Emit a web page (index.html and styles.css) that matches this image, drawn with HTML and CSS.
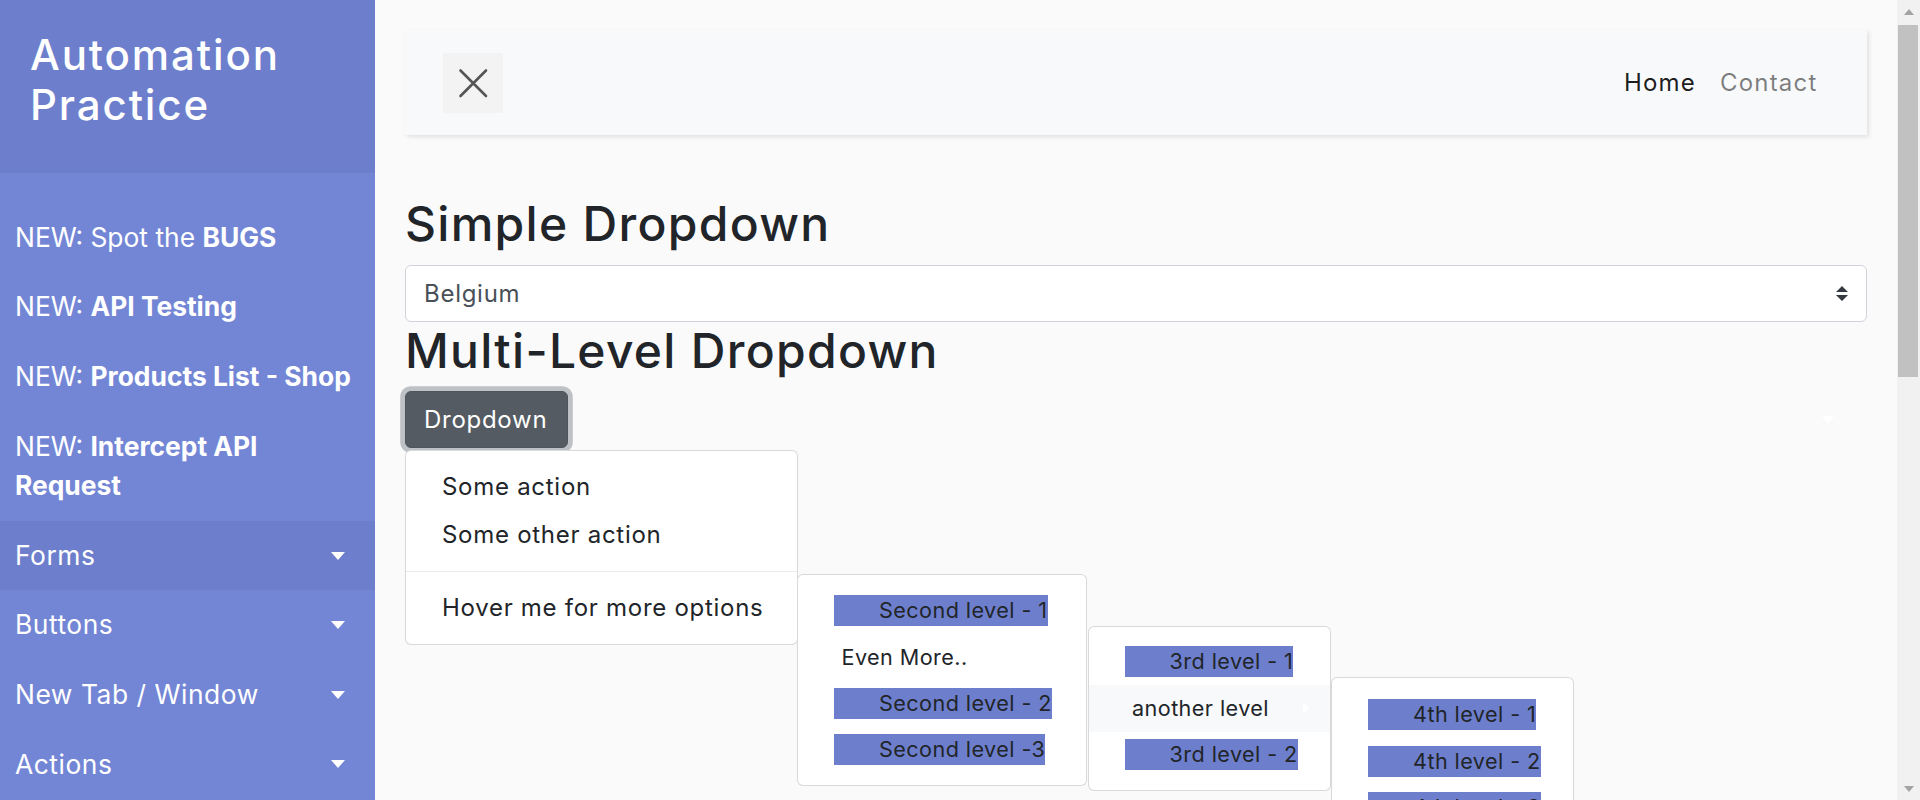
FILE: index.html
```html
<!DOCTYPE html>
<html lang="en">
<head>
<meta charset="utf-8">
<title>Automation Practice - Dropdowns</title>
<link rel="stylesheet" href="styles.css">
</head>
<body>
<div class="wrapper">
  <nav class="sidebar">
    <div class="sidebar-header">
      <h3>Automation Practice</h3>
    </div>
    <ul class="side-menu">
      <li><a href="#">NEW: Spot the <b>BUGS</b></a></li>
      <li><a href="#">NEW: <b>API Testing</b></a></li>
      <li><a href="#">NEW: <b>Products List - Shop</b></a></li>
      <li><a href="#">NEW: <b>Intercept API<br>Request</b></a></li>
      <li class="active"><a class="toggle" href="#">Forms</a></li>
      <li><a class="toggle" href="#">Buttons</a></li>
      <li><a class="toggle" href="#">New Tab / Window</a></li>
      <li><a class="toggle" href="#">Actions</a></li>
    </ul>
  </nav>

  <main class="content">
    <div class="navbar">
      <button class="close-btn" type="button" aria-label="Close">
        <svg width="60" height="60" viewBox="0 0 60 60"><path d="M17.5 17.5 L43 43 M43 17.5 L17.5 43" stroke="#555" stroke-width="2.6" stroke-linecap="round" fill="none"/></svg>
      </button>
      <ul class="nav-links">
        <li><a class="current" href="#">Home</a></li>
        <li><a href="#">Contact</a></li>
      </ul>
    </div>

    <h2>Simple Dropdown</h2>
    <div class="select">
      <span>Belgium</span>
      <svg width="12" height="15" viewBox="0 0 4 5"><path fill="#343a40" d="M2 0L0 2h4zm0 5L0 3h4z"/></svg>
    </div>

    <h2>Multi-Level Dropdown</h2>
    <div class="dropdown">
      <button class="dd-btn" type="button">Dropdown</button>
      <ul class="menu m1">
        <li><a class="item" href="#">Some action</a></li>
        <li><a class="item" href="#">Some other action</a></li>
        <li class="divider"></li>
        <li class="has-sub">
          <a class="item" href="#">Hover me for more options</a>
          <ul class="menu m2">
            <li class="sub-item"><a class="hl" href="#">Second level - 1</a></li>
            <li class="sub-item sub-toggle">
              <a href="#" class="plain">Even More..</a>
              <ul class="menu m3">
                <li class="sub-item"><a class="hl" href="#">3rd level - 1</a></li>
                <li class="sub-item sub-toggle hovered">
                  <a href="#" class="plain">another level</a>
                  <ul class="menu m4">
                    <li class="sub-item"><a class="hl" href="#">4th level - 1</a></li>
                    <li class="sub-item"><a class="hl" href="#">4th level - 2</a></li>
                    <li class="sub-item"><a class="hl" href="#">4th level - 3</a></li>
                  </ul>
                </li>
                <li class="sub-item"><a class="hl" href="#">3rd level - 2</a></li>
              </ul>
            </li>
            <li class="sub-item"><a class="hl" href="#">Second level - 2</a></li>
            <li class="sub-item"><a class="hl" href="#">Second level -3</a></li>
          </ul>
        </li>
      </ul>
    </div>
  </main>

  <div class="scrollbar">
    <div class="sb-btn"><span class="sb-up"></span></div>
    <div class="sb-thumb"></div>
    <div class="sb-space"></div>
    <div class="sb-btn"><span class="sb-down"></span></div>
  </div>
</div>
</body>
</html>
```

FILE: styles.css
```css
* { box-sizing: border-box; }
html, body { margin: 0; height: 800px; overflow: hidden; }
body {
  font-family: Inter, "Open Sans", "Liberation Sans", sans-serif;
  background: #fafafa;
  color: #212529;
}
a { text-decoration: none; }

.wrapper { display: flex; height: 800px; }

/* Sidebar */
.sidebar { width: 375px; flex: none; background: #7386d5; color: #fff; }
.sidebar-header { background: #6d7fcc; padding: 30px; }
.sidebar-header h3 {
  margin: 0 0 12px; font-size: 42px; line-height: 50.4px; font-weight: 500;
  letter-spacing: 0.045em;
}
.side-menu { list-style: none; margin: 0; padding: 30px 0 0; }
.side-menu a {
  display: block; padding: 15px; font-size: 26.4px; line-height: 39.6px;
  color: #fff; white-space: nowrap;
}
.side-menu .toggle { letter-spacing: 0.02em; }
.side-menu b { font-weight: 700; }
.side-menu li.active { background: #6d7fcc; }
.side-menu .toggle { position: relative; }
.side-menu .toggle::after {
  content: ""; position: absolute; right: 30px; top: 50%; margin-top: -4px;
  border-top: 8px solid #fff; border-left: 7px solid transparent; border-right: 7px solid transparent;
}

/* Content */
.content { flex: 1; min-width: 0; padding: 30px; }
.navbar {
  display: flex; align-items: center; justify-content: space-between;
  background: #f8f9fa; padding: 22.5px 37.5px; margin-bottom: 60px;
  box-shadow: 1.5px 1.5px 4.5px rgba(0,0,0,.1);
}
.close-btn {
  width: 60px; height: 60px; border: 0; padding: 0; background: #f3f3f3;
  display: flex; align-items: center; justify-content: center;
}
.nav-links { display: flex; list-style: none; margin: 0; padding: 0; }
.nav-links a {
  display: block; padding: 0 12px; font-size: 24px; line-height: 36px;
  color: rgba(0,0,0,.5); letter-spacing: 0.05em;
}
.nav-links a.current { color: rgba(0,0,0,.9); }

h2 {
  margin: 0 0 12px; font-size: 48px; line-height: 57.6px; font-weight: 500;
  color: #212529; letter-spacing: 0.027em;
}

.select {
  height: 57px; border: 1.5px solid #ced4da; border-radius: 6px; background: #fff;
  padding: 0 18px; display: flex; align-items: center; justify-content: space-between;
  font-size: 24px; color: #495057; letter-spacing: 0.03em;
}

.dropdown { position: relative; display: flex; }
.dropdown::after {
  content: ""; position: absolute; right: 33px; top: 50%; margin-top: -4px;
  border-top: 8px solid #fff; border-left: 6.5px solid transparent; border-right: 6.5px solid transparent;
}
.dd-btn {
  width: 163px; height: 57px; padding: 0 18px; text-align: left;
  font-family: inherit; font-size: 24px; line-height: 36px; color: #fff;
  letter-spacing: 0.03em;
  background: #545b62; border: 1.5px solid #4e555b; border-radius: 6px;
  box-shadow: 0 0 0 4.8px rgba(130,138,145,.5);
}

/* Menus */
.menu {
  position: absolute; list-style: none; margin: 0; padding: 12px 0;
  background: #fff; border: 1.5px solid rgba(0,0,0,.15); border-radius: 6px;
}
.m1 { top: 100%; left: 0; margin-top: 1.5px; width: 393px; z-index: 1; }
.m1 .item {
  display: block; padding: 6px 36px; font-size: 24px; line-height: 36px;
  color: #212529; white-space: nowrap; letter-spacing: 0.03em;
}
.divider { height: 0; margin: 12px 0; border-top: 1.5px solid #e9ecef; }
.has-sub { position: relative; }
.m2 { left: 100%; top: -9.5px; width: 290px; }
.m3 { left: calc(100% + 1.5px); top: -8px; width: 243px; }
.m4 { left: calc(100% + 1.5px); top: -8px; width: 243px; }

.sub-item {
  position: relative; display: flex; align-items: center; height: 46.5px;
  padding-left: 36px; font-size: 21.6px; white-space: nowrap; letter-spacing: 0.02em;
}
.hl { display: block; height: 31px; line-height: 31px; padding-left: 45px; background: #6d7fcc; color: #212529; }
.sub-toggle { padding-left: 43.5px; }
.plain { color: #212529; }
.hovered { background: #f8f9fa; }
.hovered::after {
  content: ""; position: absolute; right: 21px; top: 50%; margin-top: -6.5px;
  border-left: 6.5px solid #fff; border-top: 6.5px solid transparent; border-bottom: 6.5px solid transparent;
}
.m4 .sub-item:first-child { margin-top: 1.5px; }

/* Scrollbar */
.scrollbar { width: 23px; flex: none; background: #f1f1f1; display: flex; flex-direction: column; }
.sb-btn { height: 23px; display: flex; align-items: center; justify-content: center; }
.sb-up { border-bottom: 6px solid #a3a3a3; border-left: 5px solid transparent; border-right: 5px solid transparent; }
.sb-down { border-top: 6px solid #a3a3a3; border-left: 5px solid transparent; border-right: 5px solid transparent; }
.sb-thumb { height: 352px; margin: 2px 2px 0 1px; background: #c1c1c1; }
.sb-space { flex: 1; }
```
